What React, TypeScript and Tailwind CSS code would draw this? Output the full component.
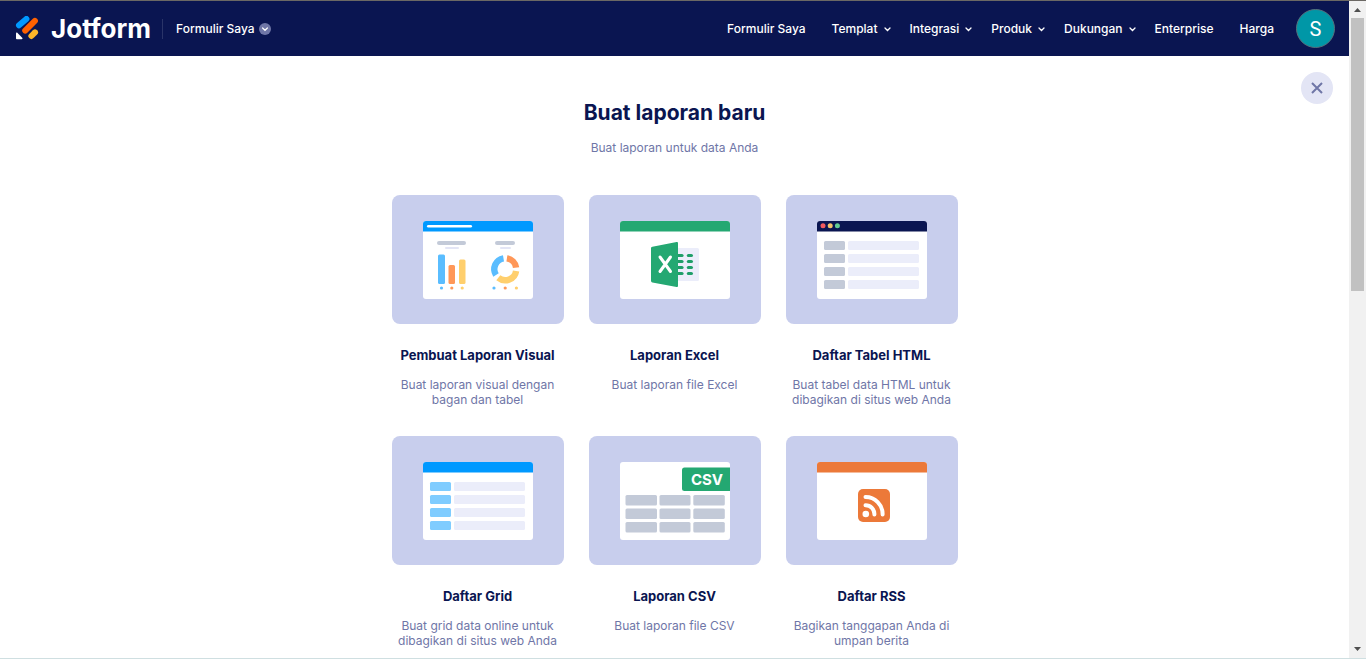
import { type ReactNode } from "react";
import clsx from "clsx";

const NAV = [
  { label: "Formulir Saya", menu: false },
  { label: "Templat", menu: true },
  { label: "Integrasi", menu: true },
  { label: "Produk", menu: true },
  { label: "Dukungan", menu: true },
  { label: "Enterprise", menu: false },
  { label: "Harga", menu: false },
];

function Logo() {
  return (
    <a href="#" className="flex items-center gap-3" aria-label="Jotform">
      <svg viewBox="0 0 24 26" className="h-[26px] w-6" aria-hidden="true">
        <g strokeWidth="6" strokeLinecap="round">
          <path d="M4 9.3 L11.4 2.9" stroke="#0099ff" />
          <path d="M10.2 14.6 L19.9 4.9" stroke="#ff6100" />
          <path d="M16.4 20 L20 16.4" stroke="#ffb629" />
        </g>
        <path d="M1 17.4 c0 -.9 .8 -1.1 1.3 -.6 L7.2 21.8 c.6 .7 .3 1.5 -.6 1.5 H2.2 C1.5 23.3 1 22.9 1 22.2Z" fill="#fff" />
      </svg>
      <span className="text-[26px] leading-none font-bold">Jotform</span>
    </a>
  );
}

function Header() {
  return (
    <header className="flex h-[55px] shrink-0 items-center bg-[#0a1551] pr-3.5 pl-[15px] text-xs font-medium text-white">
      <Logo />
      <div className="ml-[11px] h-5 w-px bg-[#2a3468]" />
      <button className="ml-[13px] flex items-center gap-1">
        Formulir Saya
        <svg viewBox="0 0 12 12" className="size-3" aria-hidden="true">
          <circle cx="6" cy="6" r="6" fill="#6f76a7" />
          <path d="M3.6 5 L6 7.3 L8.4 5" fill="none" stroke="#fff" strokeWidth="1.2" strokeLinecap="round" />
        </svg>
      </button>

      <nav className="ml-auto flex items-center">
        {NAV.map(({ label, menu }) => (
          <a key={label} href="#" className={clsx("flex items-center gap-1.5", menu ? "mr-[19px]" : "mr-[26px] last:mr-[22px]")}>
            {label}
            {menu && (
              <svg viewBox="0 0 7 5" className="mt-0.5 h-[5px] w-[7px]" aria-hidden="true">
                <path d="M1 1 L3.5 3.5 L6 1" fill="none" stroke="#fff" strokeWidth="1.3" strokeLinecap="round" />
              </svg>
            )}
          </a>
        ))}
      </nav>
      <button className="flex size-[39px] items-center justify-center rounded-full border border-[#56707c] bg-[#0097a7] font-['Roboto',sans-serif] text-xl font-normal">
        S
      </button>
    </header>
  );
}

/* White window on the lilac tile, with a coloured title bar */
function Frame({ bar, children }: { bar?: string; children: ReactNode }) {
  return (
    <svg viewBox="0 0 172 129" className="block w-full rounded-lg bg-[#c8ceed]" aria-hidden="true">
      <rect x="31" y="26" width="110" height="78" rx="3" fill="#fff" />
      {bar && <path d="M31 36.5 V29 a3 3 0 0 1 3 -3 H138 a3 3 0 0 1 3 3 V36.5Z" fill={bar} />}
      {children}
    </svg>
  );
}

const ROWS = [46, 59, 72, 85];

function Rows({ color }: { color: string }) {
  return (
    <>
      {ROWS.map((y) => (
        <g key={y}>
          <rect x="38" y={y} width="21" height="9" rx="1.5" fill={color} />
          <rect x="62" y={y} width="71" height="9" rx="1.5" fill="#ebedfa" />
        </g>
      ))}
    </>
  );
}

function VisualArt() {
  return (
    <Frame bar="#0099ff">
      <rect x="35" y="30" width="45" height="2.4" rx="1.2" fill="#fff" />
      <rect x="45" y="46" width="29" height="4" rx="2" fill="#c3cad8" />
      <rect x="53" y="52" width="14" height="2" rx="1" fill="#e3e5f5" />
      <rect x="103" y="46" width="20" height="4" rx="2" fill="#c3cad8" />
      <rect x="108" y="52" width="11" height="2" rx="1" fill="#e3e5f5" />
      <rect x="46" y="59.5" width="7" height="29.5" rx="1.5" fill="#5abdff" />
      <rect x="56.5" y="70" width="6.5" height="19" rx="1.5" fill="#ff9758" />
      <rect x="67" y="64.5" width="6.5" height="24.5" rx="1.5" fill="#ffcf6d" />
      <g fill="none" strokeWidth="6.4">
        <path d="M104 80 A11 11 0 0 1 111.5 63.3" stroke="#5abdff" />
        <path d="M114.9 63.3 A11 11 0 0 1 124.1 72.6" stroke="#ff9758" />
        <path d="M124.1 75.9 A11 11 0 0 1 106.3 82.8" stroke="#ffcf6d" />
      </g>
      <circle cx="49.5" cy="93" r="1.6" fill="#5abdff" />
      <circle cx="59.8" cy="93" r="1.6" fill="#ff9758" />
      <circle cx="70.2" cy="93" r="1.6" fill="#ffcf6d" />
      <circle cx="102" cy="93" r="1.6" fill="#5abdff" />
      <circle cx="113.2" cy="93" r="1.6" fill="#ff9758" />
      <circle cx="124.4" cy="93" r="1.6" fill="#ffcf6d" />
    </Frame>
  );
}

function ExcelArt() {
  return (
    <Frame bar="#24a872">
      <rect x="80" y="53" width="30" height="33" rx="1.5" fill="#ebedfa" />
      {[60.5, 66.5, 72.5, 78.5].map((y) => (
        <g key={y} stroke="#1f9f69" strokeWidth="3.2" strokeLinecap="round">
          <path d={`M88 ${y} H93`} />
          <path d={`M99.4 ${y} H102.4`} />
        </g>
      ))}
      <path d="M62 53.5 c0 -1 .5 -1.5 1.4 -1.7 L87.6 47 q1.4 -.3 1.4 1 V91 q0 1.3 -1.4 1 L63.4 87.4 c-.9 -.2 -1.4 -.7 -1.4 -1.6Z" fill="#24a872" />
      <path d="M71 62 L81.5 76.5 M81.5 62 L71 76.5" stroke="#fff" strokeWidth="3" strokeLinecap="round" />
    </Frame>
  );
}

function HtmlArt() {
  return (
    <Frame bar="#0a1551">
      <circle cx="37" cy="30.7" r="2.5" fill="#f25a5f" />
      <circle cx="44.2" cy="30.7" r="2.5" fill="#f6c26b" />
      <circle cx="51.4" cy="30.7" r="2.5" fill="#64cb92" />
      <Rows color="#c3cad8" />
    </Frame>
  );
}

function GridArt() {
  return (
    <Frame bar="#0099ff">
      <Rows color="#7fccff" />
    </Frame>
  );
}

function CsvArt() {
  return (
    <Frame>
      <path d="M95.5 31.5 H141 V55 H95.5 a2.5 2.5 0 0 1 -2.5 -2.5 V34 a2.5 2.5 0 0 1 2.5 -2.5Z" fill="#24a872" />
      <text x="118" y="49" textAnchor="middle" fill="#fff" className="text-[15px] font-bold">
        CSV
      </text>
      {[59, 72.5, 86].map((y) => (
        <g key={y} fill="#c3cad8">
          <rect x="36.5" y={y} width="31.5" height="10.5" rx="1.5" />
          <rect x="70.5" y={y} width="31" height="10.5" rx="1.5" />
          <rect x="104.3" y={y} width="31.5" height="10.5" rx="1.5" />
        </g>
      ))}
    </Frame>
  );
}

function RssArt() {
  return (
    <Frame bar="#ec7939">
      <rect x="72" y="53" width="32" height="33" rx="5" fill="#ec7939" />
      <circle cx="79.8" cy="78" r="3.3" fill="#fff" />
      <g fill="none" stroke="#fff" strokeWidth="4" strokeLinecap="round">
        <path d="M79.5 69.3 A8.8 8.8 0 0 1 88.4 78.4" />
        <path d="M79.5 61 A17 17 0 0 1 96.6 78.4" />
      </g>
    </Frame>
  );
}

const REPORTS = [
  { title: "Pembuat Laporan Visual", text: "Buat laporan visual dengan bagan dan tabel", art: <VisualArt /> },
  { title: "Laporan Excel", text: "Buat laporan file Excel", art: <ExcelArt /> },
  { title: "Daftar Tabel HTML", text: "Buat tabel data HTML untuk dibagikan di situs web Anda", art: <HtmlArt /> },
  { title: "Daftar Grid", text: "Buat grid data online untuk dibagikan di situs web Anda", art: <GridArt /> },
  { title: "Laporan CSV", text: "Buat laporan file CSV", art: <CsvArt /> },
  { title: "Daftar RSS", text: "Bagikan tanggapan Anda di umpan berita", art: <RssArt /> },
];

function ScrollRail() {
  return (
    <div className="flex w-[17px] shrink-0 flex-col items-center bg-[#f1f1f1]" aria-hidden="true">
      <svg viewBox="0 0 17 17" className="size-[17px] shrink-0">
        <path d="M5 11 L8.5 7 L12 11Z" fill="#505050" />
      </svg>
      <div className="w-full flex-1 px-0.5">
        <div className="h-7/16 bg-[#c1c1c1]" />
      </div>
      <svg viewBox="0 0 17 17" className="size-[17px] shrink-0">
        <path d="M5 6 L8.5 10 L12 6Z" fill="#505050" />
      </svg>
    </div>
  );
}

export default function App() {
  return (
    <div className="flex h-screen border-t border-b border-t-[#6b6864] border-b-[#cfdfe1] bg-white font-['Inter',sans-serif]">
      <div className="flex min-w-0 flex-1 flex-col overflow-hidden">
        <Header />
        <main className="relative flex flex-col items-center px-6 pt-[43px] text-center">
          <button
            aria-label="Tutup"
            className="absolute top-4 right-4 flex size-8 items-center justify-center rounded-full bg-[#e3e5f5]"
          >
            <svg viewBox="0 0 12 12" className="size-3" fill="none" stroke="#6f76a7" strokeWidth="2">
              <path d="M1 1 L11 11 M11 1 L1 11" />
            </svg>
          </button>

          <h1 className="text-[21px] leading-7 font-bold text-[#0a1551]">Buat laporan baru</h1>
          <p className="mt-[13px] text-xs leading-[15px] text-[#6f76a7]">Buat laporan untuk data Anda</p>

          <div className="mt-10 grid w-full max-w-[566px] grid-cols-3 gap-x-[25px] gap-y-[29px]">
            {REPORTS.map(({ title, text, art }) => (
              <a key={title} href="#" className="flex flex-col">
                {art}
                <h2 className="mt-[21px] text-[13px] leading-5 font-bold whitespace-nowrap text-[#0a1551]">{title}</h2>
                <p className="mt-3 px-1 text-xs leading-[15px] text-[#6f76a7]">{text}</p>
              </a>
            ))}
          </div>
        </main>
      </div>
      <ScrollRail />
    </div>
  );
}
